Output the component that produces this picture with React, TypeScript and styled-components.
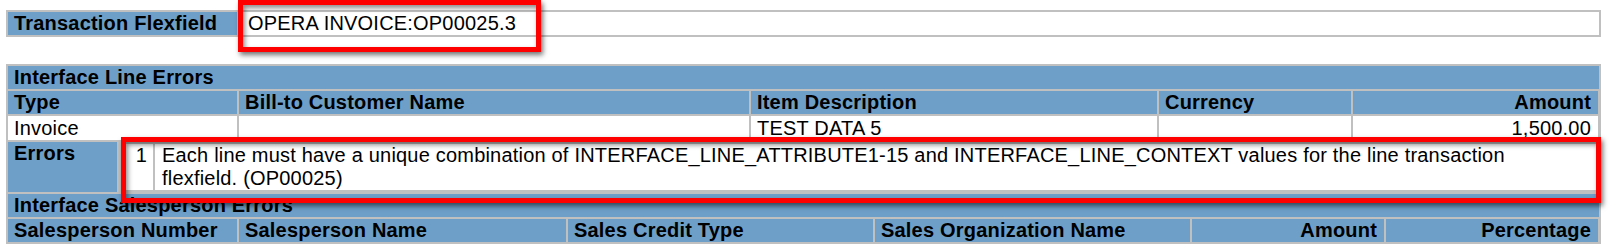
import React from 'react';
import styled, { createGlobalStyle } from 'styled-components';

const BLUE = '#6e9fc8';
const GRID = '#c0c0c0';

const GlobalStyle = createGlobalStyle`
  body {
    margin: 0;
    background: #fff;
    font-family: "Liberation Sans", Arial, sans-serif;
    font-size: 20px;
    letter-spacing: 0.2px;
    color: #000;
  }
`;

const Page = styled.div`
  position: relative;
  padding: 10px 0 0 6px;
  width: 1614px;
  height: 251px;
  box-sizing: border-box;
  overflow: hidden;
`;

const Frame = styled.div<{ $gapTop?: number }>`
  width: 1595px;
  box-sizing: border-box;
  margin-top: ${p => p.$gapTop || 0}px;
  padding: 2px;
  background: ${GRID};
  display: flex;
  flex-direction: column;
  gap: 2px;
`;

const Row = styled.div<{ $cols: string }>`
  display: grid;
  grid-template-columns: ${p => p.$cols};
  gap: 2px;
`;

const Cell = styled.div<{ $head?: boolean; $right?: boolean; $lh?: number }>`
  background: ${p => (p.$head ? BLUE : '#fff')};
  font-weight: ${p => (p.$head ? 700 : 400)};
  text-align: ${p => (p.$right ? 'right' : 'left')};
  line-height: ${p => p.$lh || 23}px;
  padding: 0 7px 0 6px;
  white-space: nowrap;
  overflow: hidden;
`;

const Nested = styled.div`
  display: grid;
  grid-template-columns: 32px 1fr;
  gap: 2px;
  padding: 2px;
  background: ${GRID};
`;

const Num = styled(Cell)`
  text-align: right;
  padding: 0 6px 0 0;
`;

const Message = styled(Cell)`
  white-space: normal;
  padding: 0 18px 0 7px;
`;

const ValueCell = styled(Cell)`
  padding-left: 9px;
`;

// red callouts drawn over the screenshot
const Callout = styled.div`
  position: absolute;
  box-sizing: border-box;
  border: 5px solid #ff0000;
  box-shadow: 2px 3px 5px rgba(0, 0, 0, 0.55),
    inset 2px 3px 5px rgba(0, 0, 0, 0.45);
  pointer-events: none;
`;

const Redact = styled.div`
  position: absolute;
  background: #fff;
`;

const LINE_COLS = '229px 510px 406px 192px 245px';
const SALES_COLS = '229px 327px 305px 315px 192px 212px';

export default function App() {
  return (
    <Page>
      <GlobalStyle />
      <Frame>
        <Row $cols="229px 1fr">
          <Cell $head>Transaction Flexfield</Cell>
          <ValueCell>OPERA INVOICE:OP00025.3</ValueCell>
        </Row>
      </Frame>

      <Frame $gapTop={27}>
        <Cell $head>Interface Line Errors</Cell>
        <Row $cols={LINE_COLS}>
          <Cell $head>Type</Cell>
          <Cell $head>Bill-to Customer Name</Cell>
          <Cell $head>Item Description</Cell>
          <Cell $head>Currency</Cell>
          <Cell $head $right>
            Amount
          </Cell>
        </Row>
        <Row $cols={LINE_COLS}>
          <Cell $lh={24}>Invoice</Cell>
          <Cell $lh={24}></Cell>
          <Cell $lh={24}>TEST DATA 5</Cell>
          <Cell $lh={24}></Cell>
          <Cell $lh={24} $right>
            1,500.00
          </Cell>
        </Row>
        <Row $cols="109px 1fr">
          <Cell $head>Errors</Cell>
          <Nested>
            <Num>1</Num>
            <Message>
              Each line must have a unique combination of
              INTERFACE_LINE_ATTRIBUTE1-15 and INTERFACE_LINE_CONTEXT values
              for the line transaction flexfield. (OP00025)
            </Message>
          </Nested>
        </Row>
        <Cell $head>Interface Salesperson Errors</Cell>
        <Row $cols={SALES_COLS}>
          <Cell $head>Salesperson Number</Cell>
          <Cell $head>Salesperson Name</Cell>
          <Cell $head>Sales Credit Type</Cell>
          <Cell $head>Sales Organization Name</Cell>
          <Cell $head $right>
            Amount
          </Cell>
          <Cell $head $right>
            Percentage
          </Cell>
        </Row>
      </Frame>

      <Redact style={{ left: 1163, top: 131, width: 46, height: 9 }} />
      <Callout style={{ left: 238, top: 0, width: 303, height: 52 }} />
      <Callout style={{ left: 121, top: 137, width: 1480, height: 66 }} />
    </Page>
  );
}
